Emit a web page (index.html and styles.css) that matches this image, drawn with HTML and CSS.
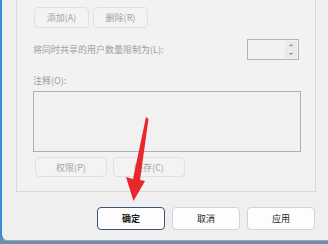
FILE: index.html
```html
<!DOCTYPE html>
<html lang="zh-CN">

<head>
    <meta charset="UTF-8">
    <title>共享设置</title>
    <link rel="stylesheet" href="styles.css">
</head>

<body>
    <div class="window">
        <!-- Tab page -->
        <div class="panel">
            <div class="btn-row top-row">
                <button class="btn disabled small">添加(A)</button>
                <button class="btn disabled small">删除(R)</button>
            </div>

            <div class="limit-row">
                <span class="label">将同时共享的用户数量限制为(L):</span>
                <div class="spin">
                    <div class="spin-arrows">
                        <span class="arrow-up"></span>
                        <span class="arrow-down"></span>
                    </div>
                </div>
            </div>

            <div class="label comment-label">注释(O):</div>
            <div class="comment-box"></div>

            <div class="btn-row perm-row">
                <button class="btn disabled wide">权限(P)</button>
                <button class="btn disabled wide">缓存(C)</button>
            </div>
        </div>

        <!-- Dialog buttons -->
        <div class="footer">
            <button class="btn action default">确定</button>
            <button class="btn action">取消</button>
            <button class="btn action">应用</button>
        </div>
    </div>

    <!-- Red annotation arrow -->
    <svg class="pointer" width="328" height="244" viewBox="0 0 328 244">
        <polygon points="146,117 148.5,119 140,180 145,181 133.5,201 126,177 133,179" fill="#e8262b" />
    </svg>
</body>

</html>
```

FILE: styles.css
```css
* {
    box-sizing: border-box;
    margin: 0;
    padding: 0;
}

body {
    width: 328px;
    height: 244px;
    overflow: hidden;
    position: relative;
    background-color: #6f8caa;
    font-family: 'Noto Sans CJK SC', 'Liberation Sans', sans-serif;
    font-size: 9px;
}

.window {
    height: 241px;
    background-color: #efefef;
    border-left: 2px solid #3d8bdb;
    border-bottom: 1px solid #9aa6b2;
    border-bottom-left-radius: 7px;
    padding: 0 12px 0 14px;
    display: flex;
    flex-direction: column;
}

.panel {
    height: 192px;
    background-color: #f2f2f2;
    border: 1px solid #d9d9d9;
    border-top: none;
}

.btn {
    font-family: inherit;
    font-size: 9px;
    border-radius: 4px;
    display: flex;
    align-items: center;
    justify-content: center;
}

.btn.disabled {
    background-color: #f3f3f3;
    border: 1px solid #e0e0e0;
    color: #a3a3a3;
}

.btn-row {
    display: flex;
}

.top-row {
    margin-top: 7px;
    padding-left: 17px;
    gap: 4px;
}

.small {
    width: 55px;
    height: 21px;
}

.limit-row {
    display: flex;
    align-items: center;
    justify-content: space-between;
    margin-top: 11px;
    padding: 0 16px;
    height: 21px;
}

.label {
    color: #a0a0a0;
    line-height: 12px;
}

.spin {
    width: 52px;
    height: 21px;
    border: 1px solid #b4b4b4;
    display: flex;
    justify-content: flex-end;
    padding: 1px;
}

.spin-arrows {
    width: 12px;
    display: flex;
    flex-direction: column;
    justify-content: space-around;
    align-items: center;
    background-color: #e9e9e9;
}

.arrow-up,
.arrow-down {
    width: 0;
    height: 0;
    border-left: 2px solid transparent;
    border-right: 2px solid transparent;
}

.arrow-up {
    border-bottom: 2px solid #8a8a8a;
}

.arrow-down {
    border-top: 2px solid #8a8a8a;
}

.comment-label {
    margin-top: 15px;
    padding-left: 16px;
}

.comment-box {
    margin: 4px 0 0 16px;
    width: 268px;
    height: 61px;
    border: 1px solid #b0b0b0;
    background-color: #f1f1f1;
}

.perm-row {
    margin-top: 5px;
    padding-left: 18px;
    gap: 6px;
}

.wide {
    width: 72px;
    height: 20px;
    border-color: #ebebeb;
}

.footer {
    display: flex;
    justify-content: flex-end;
    gap: 7px;
    margin-top: 15px;
    padding-right: 1px;
}

.action {
    width: 68px;
    height: 23px;
    background-color: #fdfdfd;
    border: 1px solid #d3d3d3;
    color: #1b1b1b;
}

.action.default {
    border: 1px solid #3b5670;
    box-shadow: inset 0 0 0 1px #ffffff;
    font-weight: 600;
}

.pointer {
    position: absolute;
    left: 0;
    top: 0;
    pointer-events: none;
}
```
